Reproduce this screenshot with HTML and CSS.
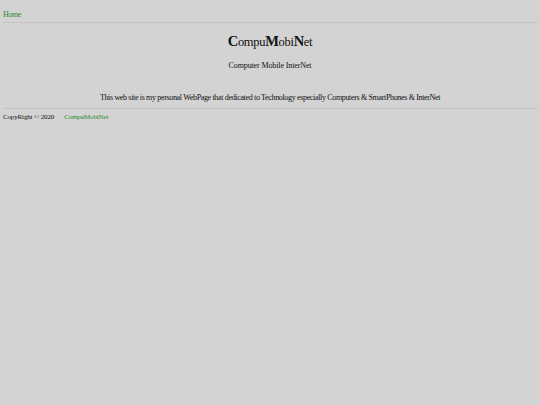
FILE: index.html
```html
<!DOCTYPE html>
<html>
<head>
<meta charset="utf-8">
<link rel="stylesheet" href="styles.css">
</head>
<body>
<nav class="nav"><a href="#" class="link">Home</a></nav>
<header class="header">
  <h1 class="title"><b class="cap">C</b>ompu<b class="cap">M</b>obi<b class="cap">N</b>et</h1>
  <p class="subtitle">Computer Mobile InterNet</p>
</header>
<main class="main">
  <p class="desc">This web site is my personal WebPage that dedicated to Technology especially Computers &amp; SmartPhones &amp; InterNet</p>
</main>
<footer class="footer">
  <span>CopyRight © 2020</span>
  <a href="#" class="link">CompuMobiNet</a>
</footer>
</body>
</html>
```

FILE: styles.css
```css
html, body {
  margin: 0;
  padding: 0;
  background: #d3d3d3;
}
body {
  font-family: "Liberation Serif", "Times New Roman", serif;
  font-size: 8px;
  color: #111;
  padding: 0 3px;
}
.link {
  color: #2e8b2e;
  text-decoration: none;
}
.nav {
  padding-top: 10px;
  height: 12px;
  line-height: 10px;
  letter-spacing: -0.4px;
  border-bottom: 1px solid #c4c4c4;
}
.header {
  text-align: center;
}
.title {
  margin: 10px 0 0;
  font-size: 12.5px;
  font-weight: normal;
  line-height: 16px;
  letter-spacing: -0.3px;
}
.cap {
  font-size: 14.5px;
  font-weight: bold;
}
.subtitle {
  margin: 11px 0 0;
  line-height: 10px;
  letter-spacing: -0.12px;
}
.main {
  text-align: center;
  border-bottom: 1px solid #c4c4c4;
}
.desc {
  margin: 22px 0 0;
  line-height: 10px;
  padding-bottom: 5px;
  letter-spacing: -0.34px;
}
.footer {
  display: flex;
  gap: 10px;
  padding-top: 3px;
  font-size: 7px;
  line-height: 10px;
  letter-spacing: -0.15px;
}
```
